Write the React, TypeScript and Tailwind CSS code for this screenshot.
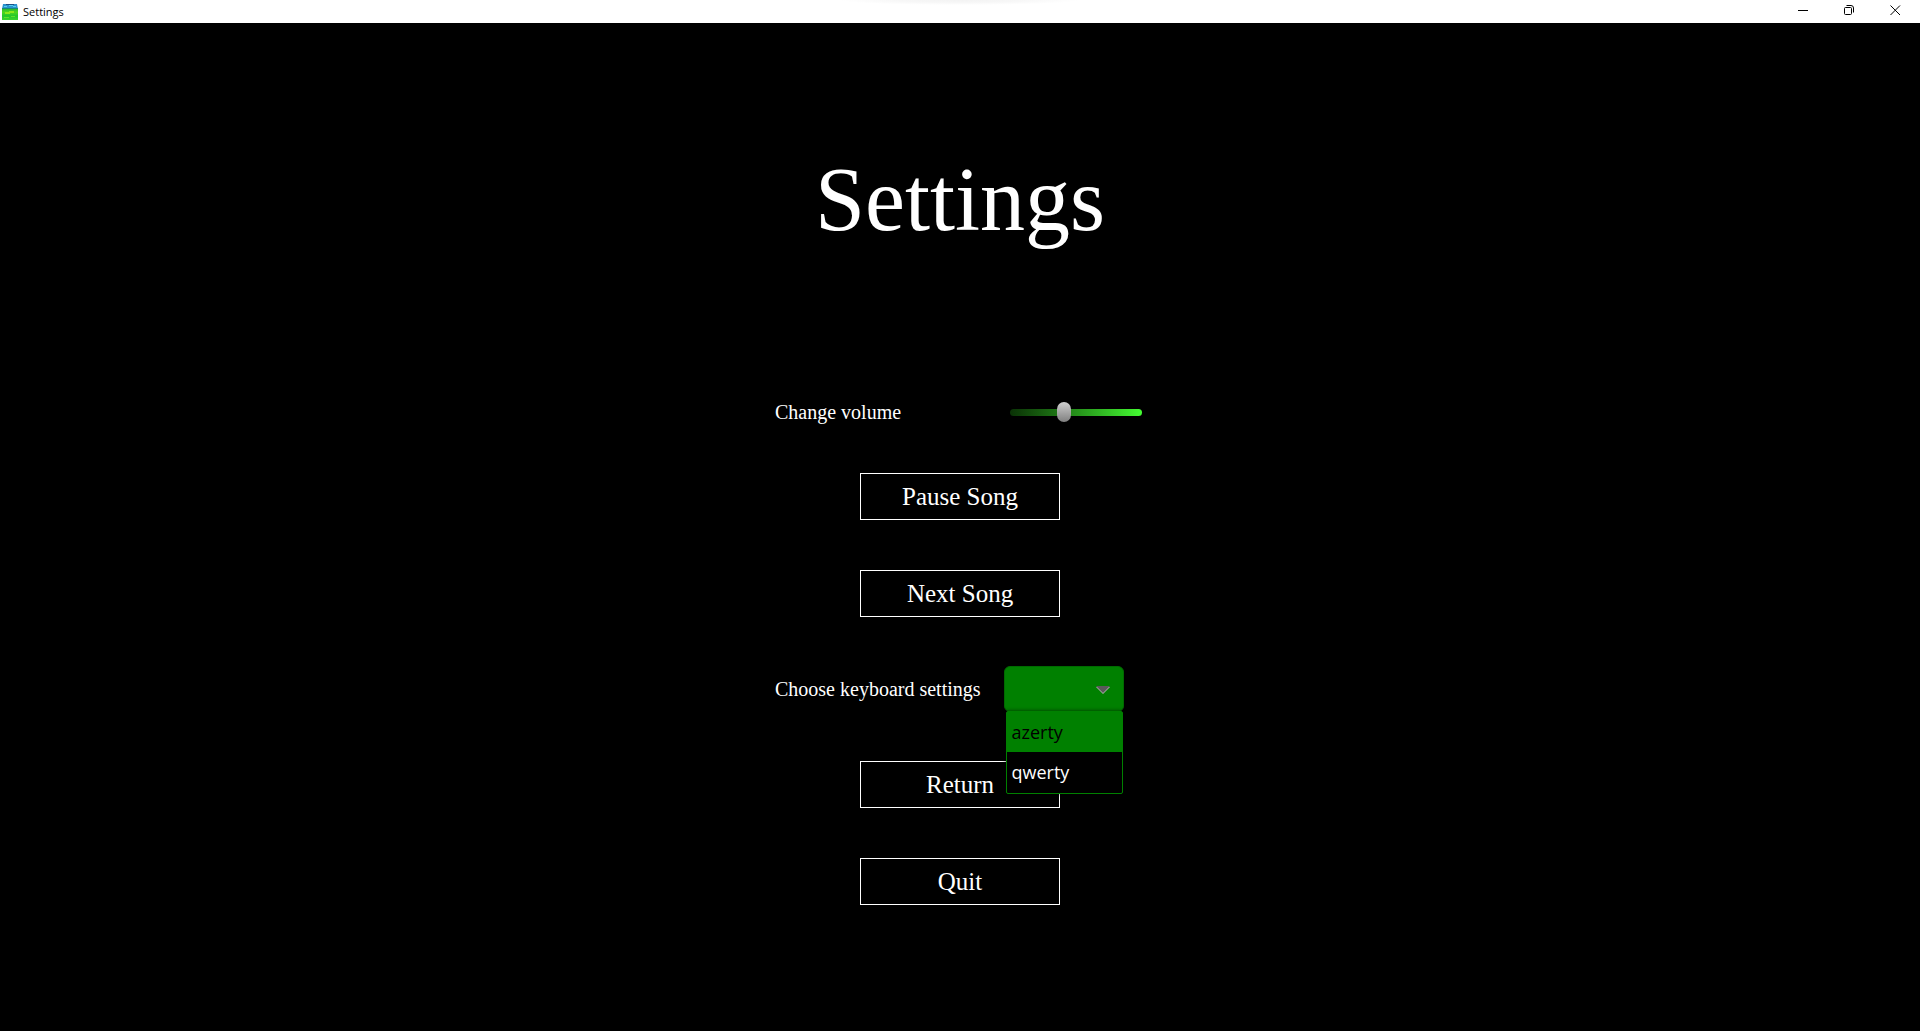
import { useState } from "react";

const layouts = ["azerty", "qwerty"];

function MenuButton({ label }: { label: string }) {
  return (
    <button
      type="button"
      className="h-[47px] w-[200px] border border-white bg-black pt-0.5 text-[25px] leading-7 text-white"
    >
      {label}
    </button>
  );
}

function AppIcon() {
  return (
    <svg width="16" height="16" viewBox="0 0 16 16" aria-hidden="true">
      <defs>
        <linearGradient id="grass" x1="0" y1="0" x2="0" y2="1">
          <stop offset="0" stopColor="#1fae38" />
          <stop offset="0.35" stopColor="#4fd81c" />
          <stop offset="0.65" stopColor="#22c62c" />
          <stop offset="1" stopColor="#3bd52e" />
        </linearGradient>
      </defs>
      <path d="M0 4h16v12H0z" fill="url(#grass)" />
      <path d="M1 0h14l1 5H0z" fill="#2b93cf" />
      <path d="M4 0h8v1H4z" fill="#1c4f86" />
      <path d="M2 2h3v1H2zM7 1h4v1H7zM11 2h3v1h-3z" fill="#55d0ee" />
      <path d="M0 4h16v1H0z" fill="#178a78" />
      <path d="M3 8h4V7h5v2H8v1H3z" fill="#8be81c" />
      <path d="M2 13h5v1H2zM9 12h4v1H9z" fill="#5fe22a" />
    </svg>
  );
}

function TitleBar() {
  return (
    <header className="flex h-[23px] shrink-0 items-start justify-between bg-white bg-[radial-gradient(ellipse_120px_5px_at_50%_0,#f3f3f3_0%,#f7f7f7_50%,#ffffff_100%)] pr-0.5 pl-0.5 text-black">
      <div className="flex h-[23px] items-center gap-[5px] font-['Open_Sans',sans-serif] text-[11px] leading-4">
        <AppIcon />
        <span>Settings</span>
      </div>
      <div className="flex">
        <button type="button" aria-label="Minimize" className="flex h-[21px] w-[46px] items-center justify-center">
          <svg width="11" height="11" viewBox="0 0 11 11" shapeRendering="crispEdges">
            <path d="M0 5.5h10" stroke="#000" />
          </svg>
        </button>
        <button type="button" aria-label="Restore" className="flex h-[21px] w-[46px] items-center justify-center">
          <svg width="11" height="11" viewBox="0 0 11 11" fill="none" stroke="#000">
            <rect x="0.5" y="2.5" width="7" height="7" rx="1" />
            <path d="M2.5 0.5H7A2.5 2.5 0 0 1 9.5 3v4.5" />
          </svg>
        </button>
        <button type="button" aria-label="Close" className="flex h-[21px] w-[46px] items-center justify-center">
          <svg width="11" height="11" viewBox="0 0 11 11" fill="none" stroke="#000">
            <path d="M0.5 0.5l9.5 9.5M10 0.5L0.5 10" />
          </svg>
        </button>
      </div>
    </header>
  );
}

function VolumeRow() {
  const [volume, setVolume] = useState(40);
  return (
    <div className="flex h-5 w-[370px] items-center justify-between">
      <label htmlFor="volume" className="pb-0.5 text-[20px] leading-6">
        Change volume
      </label>
      <div className="flex px-[3px]">
        <input
          id="volume"
          type="range"
          min={0}
          max={100}
          value={volume}
          onChange={(e) => setVolume(Number(e.target.value))}
          className="h-5 w-[132px] appearance-none bg-transparent [&::-webkit-slider-runnable-track]:h-[7px] [&::-webkit-slider-runnable-track]:rounded-full [&::-webkit-slider-runnable-track]:bg-linear-to-r [&::-webkit-slider-runnable-track]:from-[#0a3206] [&::-webkit-slider-runnable-track]:to-[#44fc32] [&::-webkit-slider-thumb]:-mt-[7px] [&::-webkit-slider-thumb]:h-5 [&::-webkit-slider-thumb]:w-3.5 [&::-webkit-slider-thumb]:appearance-none [&::-webkit-slider-thumb]:rounded-[7px] [&::-webkit-slider-thumb]:bg-linear-to-b [&::-webkit-slider-thumb]:from-[#d0d0d0] [&::-webkit-slider-thumb]:to-[#808080]"
        />
      </div>
    </div>
  );
}

function KeyboardRow() {
  const [layout, setLayout] = useState("");
  return (
    <div className="flex h-11 w-[370px] items-center gap-[23px]">
      <label htmlFor="keyboard" className="text-[20px] leading-6">
        Choose keyboard settings
      </label>
      <div className="relative">
        <select
          id="keyboard"
          value={layout}
          onChange={(e) => setLayout(e.target.value)}
          className="block h-[46px] w-[120px] appearance-none rounded-md border border-[#006a00] bg-[#008000] px-2 font-['Open_Sans',sans-serif] text-[18px] text-black"
        >
          <option value=""></option>
          {layouts.map((name) => (
            <option key={name} value={name}>
              {name}
            </option>
          ))}
        </select>
        <svg
          className="pointer-events-none absolute top-5 right-3.5"
          width="14"
          height="8"
          viewBox="0 0 14 8"
          aria-hidden="true"
        >
          <path d="M0 1h14L7 8z" fill="#b4b4b4" />
          <path d="M0 0h14L7 7z" fill="#595959" />
        </svg>
        <ul
          role="listbox"
          aria-label="Keyboard layouts"
          className="absolute top-[45px] left-0.5 w-[117px] rounded-xs border border-[#008000] bg-black font-['Open_Sans',sans-serif] text-[18px] leading-6 shadow-[0_0_4px_rgba(0,0,0,0.6)]"
        >
          {layouts.map((name) => (
            <li
              key={name}
              role="option"
              aria-selected={name === layout}
              onClick={() => setLayout(name)}
              className="flex h-[41px] items-center px-[5px] text-white first:h-10 first:bg-[#008000] first:text-black"
            >
              {name}
            </li>
          ))}
        </ul>
      </div>
    </div>
  );
}

export default function App() {
  return (
    <div className="flex min-h-screen flex-col bg-black font-['Liberation_Serif',serif] text-white">
      <TitleBar />
      <main className="flex grow flex-col items-center justify-center gap-[50px]">
        <h1 className="mb-[103px] text-[90px] leading-[100px]">Settings</h1>
        <VolumeRow />
        <MenuButton label="Pause Song" />
        <MenuButton label="Next Song" />
        <KeyboardRow />
        <MenuButton label="Return" />
        <MenuButton label="Quit" />
      </main>
    </div>
  );
}
